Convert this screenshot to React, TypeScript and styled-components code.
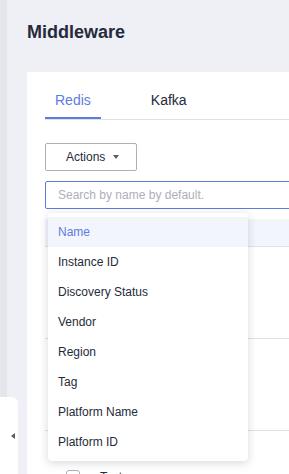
import React from "react";
import styled, { createGlobalStyle } from "styled-components";

const GlobalStyle = createGlobalStyle`
  html, body {
    margin: 0;
    padding: 0;
    width: 289px;
    height: 474px;
    overflow: hidden;
    background: #eef0f5;
    font-family: "Liberation Sans", Arial, sans-serif;
    color: #252b3a;
  }
  * { box-sizing: border-box; }
`;

const Shell = styled.div`
  display: flex;
  height: 474px;
  position: relative;
  overflow: hidden;
`;

const SideStrip = styled.div`
  width: 7px;
  flex: none;
  background: #e4e6ec;
`;

const CollapseHandle = styled.div`
  position: absolute;
  left: 0;
  top: 397px;
  width: 18px;
  height: 90px;
  background: #fff;
  border-radius: 0 6px 6px 0;
  display: flex;
  align-items: center;
  justify-content: center;
  padding-left: 8px;
  padding-bottom: 13px;
`;

const HandleArrow = styled.span`
  width: 0;
  height: 0;
  border-top: 3px solid transparent;
  border-bottom: 3px solid transparent;
  border-right: 4px solid #575d6c;
`;

const Main = styled.main`
  flex: 1;
  padding: 20px 0 0 20px;
  display: flex;
  flex-direction: column;
  min-width: 0;
`;

const Title = styled.h1`
  margin: 0 0 28px;
  font-size: 18px;
  line-height: 24px;
  font-weight: 700;
  color: #252b3a;
`;

const Card = styled.section`
  width: 420px;
  flex: 1;
  background: #fff;
  padding: 18px 0 0 18px;
  display: flex;
  flex-direction: column;
`;

const TabList = styled.div`
  display: flex;
  gap: 40px;
  border-bottom: 1px solid #dfe1e6;
`;

const Tab = styled.div<{ $active?: boolean }>`
  position: relative;
  padding: 0 10px 9px;
  font-size: 14px;
  line-height: 20px;
  color: ${(p) => (p.$active ? "#5e7ce0" : "#252b3a")};

  &::after {
    content: "";
    display: ${(p) => (p.$active ? "block" : "none")};
    position: absolute;
    left: 0;
    right: 0;
    bottom: 0;
    height: 2px;
    background: #5e7ce0;
  }
`;

const Toolbar = styled.div`
  margin-top: 23px;
  display: flex;
`;

const ActionsButton = styled.button`
  width: 92px;
  height: 28px;
  display: flex;
  align-items: center;
  padding: 0 0 0 20px;
  gap: 8px;
  background: #fff;
  border: 1px solid #adb0b8;
  border-radius: 2px;
  font-family: inherit;
  font-size: 12px;
  color: #252b3a;
`;

const Caret = styled.span`
  width: 0;
  height: 0;
  border-left: 3.5px solid transparent;
  border-right: 3.5px solid transparent;
  border-top: 4px solid #575d6c;
`;

const SearchWrap = styled.div`
  position: relative;
  margin-top: 10px;
`;

const SearchInput = styled.input`
  width: 100%;
  height: 28px;
  border: 1px solid #5e7ce0;
  border-radius: 2px;
  padding: 0 12px;
  font-family: inherit;
  font-size: 12px;
  color: #252b3a;
  outline: none;

  &::placeholder {
    color: #adb0b8;
  }
`;

const Menu = styled.ul`
  position: absolute;
  left: 3px;
  top: 32px;
  width: 200px;
  margin: 0;
  padding: 4px 0;
  list-style: none;
  background: #fff;
  border-radius: 4px;
  box-shadow: 0 2px 10px rgba(37, 43, 58, 0.18);
  z-index: 5;
`;

const MenuItem = styled.li<{ $active?: boolean }>`
  height: 30px;
  display: flex;
  align-items: center;
  padding: 0 10px;
  font-size: 12px;
  color: ${(p) => (p.$active ? "#5e7ce0" : "#252b3a")};
  background: ${(p) => (p.$active ? "#f2f5fc" : "transparent")};
`;

const Table = styled.div`
  margin-top: 10px;
  display: flex;
  flex-direction: column;
`;

const HeaderRow = styled.div`
  height: 28px;
  flex: none;
  background: #f2f5fc;
  border-bottom: 1px solid #dfe1e6;
`;

const Row = styled.div`
  height: 92px;
  flex: none;
  border-bottom: 1px solid #dfe1e6;
  display: flex;
  align-items: center;
  padding-left: 21px;
  gap: 20px;
  font-size: 12px;
`;

const Checkbox = styled.span`
  width: 14px;
  height: 14px;
  flex: none;
  border: 1px solid #adb0b8;
  border-radius: 3px;
  background: #fff;
`;

const fields = [
  "Name",
  "Instance ID",
  "Discovery Status",
  "Vendor",
  "Region",
  "Tag",
  "Platform Name",
  "Platform ID",
];

export default function App() {
  return (
    <>
      <GlobalStyle />
      <Shell>
        <SideStrip />
        <Main>
          <Title>Middleware</Title>
          <Card>
            <TabList>
              <Tab $active>Redis</Tab>
              <Tab>Kafka</Tab>
            </TabList>
            <Toolbar>
              <ActionsButton>
                Actions
                <Caret />
              </ActionsButton>
            </Toolbar>
            <SearchWrap>
              <SearchInput placeholder="Search by name by default." />
              <Menu>
                {fields.map((f, i) => (
                  <MenuItem key={f} $active={i === 0}>
                    {f}
                  </MenuItem>
                ))}
              </Menu>
            </SearchWrap>
            <Table>
              <HeaderRow />
              <Row />
              <Row />
              <Row>
                <Checkbox />
                <span>Test</span>
              </Row>
            </Table>
          </Card>
        </Main>
        <CollapseHandle>
          <HandleArrow />
        </CollapseHandle>
      </Shell>
    </>
  );
}
